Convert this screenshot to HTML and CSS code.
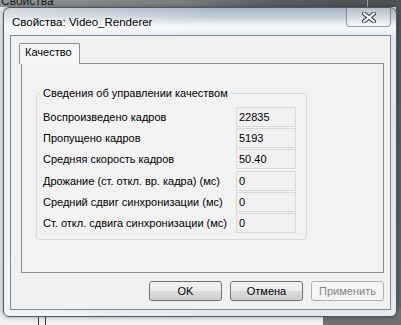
FILE: index.html
```html
<!DOCTYPE html>
<html lang="ru">
<head>
  <meta charset="UTF-8" />
  <title>Свойства: Video_Renderer</title>
  <link rel="stylesheet" href="styles.css">
</head>
<body>
  <div class="desktop">
    <!-- window behind -->
    <div class="back-title"><span>Свойства</span><i class="back-sep"></i></div>
    <div class="back-right"></div>
    <div class="back-floor"><i class="back-post"></i></div>
    <div class="back-dark"></div>

    <!-- dialog -->
    <div class="dialog">
      <div class="titlebar">
        <span class="title">Свойства: Video_Renderer</span>
        <button class="close" title="Закрыть">
          <svg width="14" height="11" viewBox="0 0 14 11">
            <path d="M2 1.5 L12 9.5 M12 1.5 L2 9.5" stroke="#3e4853" stroke-width="4.2" stroke-linecap="round"/>
            <path d="M2 1.5 L12 9.5 M12 1.5 L2 9.5" stroke="#ffffff" stroke-width="2.2" stroke-linecap="round"/>
          </svg>
        </button>
      </div>

      <div class="client">
        <div class="tabs">
          <div class="tab">Качество</div>
        </div>
        <div class="page">
          <fieldset class="group">
            <legend>Сведения об управлении качеством</legend>
            <div class="stats">
              <span class="label">Воспроизведено кадров</span><span class="value">22835</span>
              <span class="label">Пропущено кадров</span><span class="value">5193</span>
              <span class="label">Средняя скорость кадров</span><span class="value">50.40</span>
              <span class="label">Дрожание (ст. откл. вр. кадра) (мс)</span><span class="value">0</span>
              <span class="label">Средний сдвиг синхронизации (мс)</span><span class="value">0</span>
              <span class="label">Ст. откл. сдвига синхронизации (мс)</span><span class="value">0</span>
            </div>
          </fieldset>
        </div>
        <div class="actions">
          <button class="btn">OK</button>
          <button class="btn">Отмена</button>
          <button class="btn" disabled>Применить</button>
        </div>
      </div>
    </div>
  </div>
</body>
</html>
```

FILE: styles.css
```css
* { box-sizing: border-box; }
body {
  margin: 0;
  font-family: 'Liberation Sans', Arial, sans-serif;
  font-size: 11px;
  color: #000;
}
.desktop {
  position: relative;
  width: 401px;
  height: 325px;
  overflow: hidden;
  background: #e6eaed;
}

/* window behind the dialog */
.back-title {
  position: absolute;
  left: 0;
  top: 0;
  width: 401px;
  height: 7px;
  overflow: hidden;
  background: linear-gradient(90deg, #8f9397 0, #7a7f84 45%, #575c61 70%, #4b5055 100%);
}
.back-title span {
  position: absolute;
  left: 1px;
  top: -5px;
  font-size: 12px;
  line-height: 12px;
  color: #1c1f22;
}
.back-sep {
  position: absolute;
  left: 367px;
  top: 0;
  width: 1px;
  height: 7px;
  background: #9aa2aa;
}
.back-right {
  position: absolute;
  right: 0;
  top: 0;
  width: 5px;
  height: 325px;
  background: linear-gradient(#4f5459, #63686d);
}
.back-floor {
  position: absolute;
  left: 0;
  top: 312px;
  width: 401px;
  height: 13px;
  background: #eef0f1;
}
.back-post {
  position: absolute;
  left: 38px;
  top: 0;
  width: 8px;
  height: 13px;
  border-left: 1px solid #3a3a3a;
  border-right: 1px solid #3a3a3a;
}
.back-dark {
  position: absolute;
  left: 323px;
  top: 308px;
  width: 78px;
  height: 17px;
  background: #6f7173;
}

/* dialog window */
.dialog {
  position: absolute;
  left: 3px;
  top: 7px;
  width: 394px;
  height: 310px;
  display: flex;
  flex-direction: column;
  padding: 0 5px 6px 6px;
  border: 1px solid #4e5964;
  border-radius: 7px 7px 6px 6px;
  background:
    linear-gradient(90deg, rgba(255,255,255,0.45), rgba(255,255,255,0) 55%),
    linear-gradient(#a7b4c1 0, #c3ced8 9px, #eef3f7 17px, #f4f7fa 21px, #dfe7ee 28px, #e3ebf1 100%);
  box-shadow: 0 0 5px rgba(0, 0, 0, 0.35);
}
.titlebar {
  display: flex;
  height: 27px;
  flex: 0 0 27px;
}
.title {
  align-self: center;
  margin-left: 2px;
  font-size: 11.5px;
  text-shadow: 0 0 6px #fff, 0 0 3px #fff;
}
.close {
  margin-left: auto;
  width: 45px;
  height: 19px;
  padding: 0;
  display: flex;
  align-items: center;
  justify-content: center;
  border: 1px solid rgba(70, 85, 100, 0.55);
  border-top: none;
  border-radius: 0 0 4px 4px;
  background: linear-gradient(rgba(255,255,255,0.15), rgba(255,255,255,0.35));
}

.client {
  flex: 1;
  display: flex;
  flex-direction: column;
  padding: 7px 6px 0 8px;
  border: 1px solid #7c8895;
  background: #f0f0f0;
}
.tabs { display: flex; }
.tab {
  position: relative;
  z-index: 1;
  width: 61px;
  height: 21px;
  margin-bottom: -1px;
  padding: 2px 0 0 5px;
  line-height: 13px;
  border: 1px solid #898c95;
  border-bottom: none;
  border-radius: 2px 2px 0 0;
  background: #f5f5f5;
}
.page {
  width: 363px;
  height: 210px;
  margin-left: 2px;
  padding: 23px 0 0 14px;
  border: 1px solid #898c95;
  background: #f2f2f2;
}
.group {
  width: 271px;
  height: 153px;
  margin: 0;
  min-width: 0;
  padding: 0 0 0 6px;
  border: 1px solid #d3dce2;
  border-radius: 3px;
}
.group legend {
  margin-left: -2px;
  padding: 0 2px;
  line-height: 13px;
}
.stats {
  display: grid;
  grid-template-columns: 193px 60px;
  grid-auto-rows: 20px;
  row-gap: 1.2px;
  margin-top: 7px;
}
.label {
  align-self: center;
  white-space: nowrap;
}
.value {
  padding-left: 2px;
  line-height: 18px;
  border: 1px solid #d9d9d9;
  background: #f0f0f0;
}

.actions {
  display: flex;
  justify-content: flex-end;
  gap: 8px;
  margin-top: 8px;
}
.btn {
  width: 73px;
  height: 20px;
  padding: 0;
  font: inherit;
  color: #000;
  border: 1px solid #707070;
  border-radius: 3px;
  background: linear-gradient(#f2f2f2 0, #ebebeb 50%, #dddddd 50%, #cfcfcf 100%);
}
.btn:disabled {
  color: #838383;
  border-color: #adb2b5;
  background: #f4f4f4;
}
```
